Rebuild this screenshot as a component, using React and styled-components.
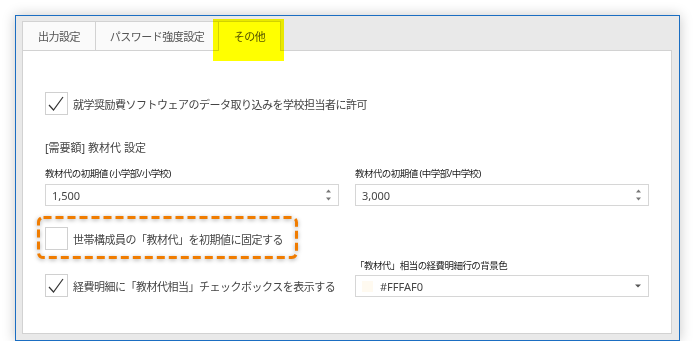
import React from "react";
import styled, { createGlobalStyle } from "styled-components";

const Global = createGlobalStyle`
  body {
    margin: 0;
    background: #ffffff;
    font-family: "Noto Sans", "Noto Sans CJK JP", sans-serif;
  }
`;

const Page = styled.div`
  padding: 15px 0 0 15px;
`;

const Window = styled.div`
  position: relative;
  box-sizing: border-box;
  width: 665px;
  height: 326px;
  border: 1px solid #1b6ec2;
  background: #e9e9e9;
  padding: 5px 7px 6px 6px;
  display: flex;
  flex-direction: column;
  box-shadow: 0 0 12px rgba(0, 0, 0, 0.22);
`;

const TabBar = styled.div`
  display: flex;
  height: 29px;
  flex: none;
`;

const Tab = styled.div`
  box-sizing: border-box;
  width: ${(p) => p.$w}px;
  height: ${(p) => (p.$active ? 30 : 29)}px;
  margin-bottom: ${(p) => (p.$active ? -1 : 0)}px;
  position: relative;
  z-index: 1;
  border-top: 1px solid #d2d2d2;
  border-left: 1px solid #d2d2d2;
  background: ${(p) => (p.$active ? "#ffffff" : "#fafafa")};
  display: flex;
  align-items: center;
  justify-content: center;
  font-size: 11px;
  letter-spacing: -0.5px;
  color: #555;
  padding-bottom: 1px;
  &:last-child {
    border-right: 1px solid #d2d2d2;
  }
`;

const Highlighter = styled.div`
  position: absolute;
  left: 197px;
  top: 3px;
  width: 71px;
  height: 42px;
  background: #ffff00;
  mix-blend-mode: multiply;
  z-index: 5;
  pointer-events: none;
`;

const Panel = styled.div`
  flex: 1;
  background: #ffffff;
  border: 1px solid #d2d2d2;
  padding: 41px 22px 0 22px;
  display: flex;
  flex-direction: column;
`;

const CheckRow = styled.div`
  display: flex;
  align-items: center;
  gap: 5px;
  font-size: 11px;
  letter-spacing: -0.5px;
  color: #444;
  white-space: nowrap;
`;

const Box = styled.span`
  box-sizing: border-box;
  width: 23px;
  height: 23px;
  border: 1px solid #d0d0d0;
  background: #fff;
  flex: none;
  display: block;
`;

const Check = ({ checked }) => (
  <Box>
    {checked && (
      <svg width="21" height="21" viewBox="0 0 21 21">
        <path d="M3 12 L7.5 17 L17 4" fill="none" stroke="#333" strokeWidth="1.2" />
      </svg>
    )}
  </Box>
);

const SectionTitle = styled.div`
  margin-top: 25px;
  font-size: 11px;
  line-height: 16px;
  color: #444;
`;

const FieldGrid = styled.div`
  display: grid;
  grid-template-columns: 294px 294px;
  column-gap: 16px;
  row-gap: ${(p) => p.$rowGap || 0}px;
  margin-top: ${(p) => p.$top}px;
  align-items: end;
`;

const Field = styled.div`
  display: flex;
  flex-direction: column;
  gap: ${(p) => p.$gap}px;
`;

const FieldLabel = styled.div`
  font-size: 9.5px;
  letter-spacing: -0.55px;
  line-height: 14px;
  color: #222;
  white-space: nowrap;
`;

const InputBox = styled.div`
  box-sizing: border-box;
  height: 22px;
  border: 1px solid #d6d6d6;
  background: #fff;
  display: flex;
  align-items: center;
  padding: 0 6px 0 6px;
  font-size: 11px;
  color: #444;
  gap: 7px;
`;

const Value = styled.span`
  flex: 1;
`;

const Swatch = styled.span`
  width: 11px;
  height: 11px;
  background: ${(p) => p.$color};
  flex: none;
`;

const Spinner = () => (
  <svg width="7" height="14" viewBox="0 0 7 14">
    <path d="M1 4.5 L3.5 1.5 L6 4.5 Z" fill="#777" />
    <path d="M1 9.5 L3.5 12.5 L6 9.5 Z" fill="#777" />
  </svg>
);

const Caret = () => (
  <svg width="8" height="6" viewBox="0 0 8 6">
    <path d="M1 1.5 L7 1.5 L4 4.5 Z" fill="#555" />
  </svg>
);

const Annotated = styled.div`
  position: relative;
  justify-self: start;
  align-self: start;
`;

const DashFrame = styled.svg`
  position: absolute;
  left: -8px;
  top: -11px;
  filter: drop-shadow(0 1px 2px rgba(0, 0, 0, 0.35));
  pointer-events: none;
`;

const tabs = [
  { label: "出力設定", w: 73 },
  { label: "パスワード強度設定", w: 123 },
  { label: "その他", w: 63, active: true },
];

export default function App() {
  return (
    <>
      <Global />
      <Page>
        <Window>
          <TabBar>
            {tabs.map((t) => (
              <Tab key={t.label} $w={t.w} $active={t.active}>
                {t.label}
              </Tab>
            ))}
          </TabBar>
          <Highlighter />
          <Panel>
            <CheckRow>
              <Check checked />
              就学奨励費ソフトウェアのデータ取り込みを学校担当者に許可
            </CheckRow>
            <SectionTitle>[需要額] 教材代 設定</SectionTitle>
            <FieldGrid $top={11}>
              <Field $gap={3}>
                <FieldLabel>教材代の初期値 (小学部/小学校)</FieldLabel>
                <InputBox>
                  <Value>1,500</Value>
                  <Spinner />
                </InputBox>
              </Field>
              <Field $gap={3}>
                <FieldLabel>教材代の初期値 (中学部/中学校)</FieldLabel>
                <InputBox>
                  <Value>3,000</Value>
                  <Spinner />
                </InputBox>
              </Field>
            </FieldGrid>
            <FieldGrid $top={21} $rowGap={9}>
              <Annotated>
                <CheckRow>
                  <Check />
                  世帯構成員の「教材代」を初期値に固定する
                </CheckRow>
                <DashFrame width="262" height="44" viewBox="0 0 262 44">
                  <rect
                    x="1.5"
                    y="1.5"
                    width="258"
                    height="40"
                    rx="5"
                    fill="none"
                    stroke="#f07c00"
                    strokeWidth="3"
                    strokeDasharray="8 4"
                  />
                </DashFrame>
              </Annotated>
              <div />
              <CheckRow>
                <Check checked />
                経費明細に「教材代相当」チェックボックスを表示する
              </CheckRow>
              <Field $gap={2}>
                <FieldLabel>「教材代」相当の経費明細行の背景色</FieldLabel>
                <InputBox>
                  <Swatch $color="#FFFAF0" />
                  <Value>#FFFAF0</Value>
                  <Caret />
                </InputBox>
              </Field>
            </FieldGrid>
          </Panel>
        </Window>
      </Page>
    </>
  );
}
